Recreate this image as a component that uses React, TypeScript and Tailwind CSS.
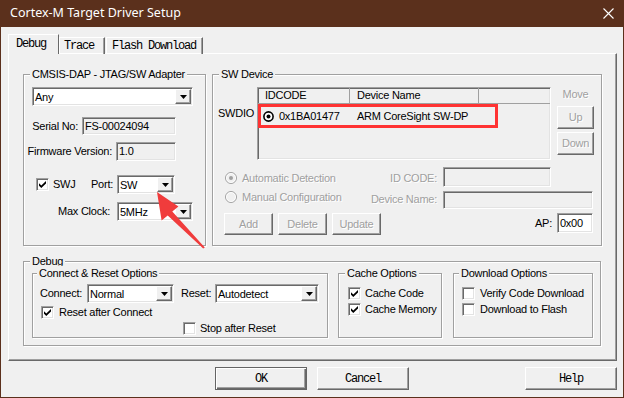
import type { ReactNode } from "react";

// Cortex-M Target Driver Setup — classic Win32 dialog look

const sunken =
  "border border-t-[#a0a0a0] border-l-[#a0a0a0] border-b-white border-r-white shadow-[inset_1px_1px_0_#696969,inset_-1px_-1px_0_#e3e3e3]";
const raised =
  "border border-t-white border-l-white border-b-[#696969] border-r-[#696969] shadow-[inset_-1px_-1px_0_#a0a0a0]";
const etched = "border border-[#a0a0a0] shadow-[1px_1px_0_#fff,inset_1px_1px_0_#fff]";
const dim = "text-[#a0a0a0] [text-shadow:1px_1px_0_#fff]";
const mono = "font-['Liberation_Mono',monospace] text-[12px] tracking-[-1.2px]";

function Tri() {
  return (
    <svg width="7" height="4" viewBox="0 0 7 4">
      <path d="M0 0h7L3.5 4z" fill="#000" />
    </svg>
  );
}

function Group({
  title,
  className,
  titleClass,
  children,
}: {
  title: string;
  className: string;
  titleClass: string;
  children?: ReactNode;
}) {
  return (
    <div className={`${etched} ${className}`}>
      <div className={`-mt-[8px] w-fit px-[2px] leading-[14px] whitespace-nowrap bg-[#f0f0f0] ${titleClass}`}>
        {title}
      </div>
      {children}
    </div>
  );
}

function Combo({ value, className }: { value: string; className: string }) {
  return (
    <div className={`flex bg-white ${sunken} ${className}`}>
      <span className="flex-1 self-center pl-[2px] leading-[14px] whitespace-nowrap">{value}</span>
      <span className={`m-px w-[16px] flex items-center justify-center bg-[#f0f0f0] ${raised}`}>
        <Tri />
      </span>
    </div>
  );
}

function Edit({ value, className, white }: { value?: string; className: string; white?: boolean }) {
  return (
    <div className={`flex items-center pl-[2px] whitespace-nowrap ${sunken} ${white ? "bg-white" : "bg-[#f0f0f0]"} ${className}`}>
      {value}
    </div>
  );
}

function Btn({ label, className, disabled }: { label: string; className: string; disabled?: boolean }) {
  return (
    <div className={`flex items-center justify-center ${raised} ${disabled ? dim : ""} ${className}`}>{label}</div>
  );
}

function Check({ checked }: { checked?: boolean }) {
  return (
    <div className={`w-[13px] h-[13px] shrink-0 flex items-center justify-center bg-white ${sunken}`}>
      {checked && (
        <svg width="7" height="7" viewBox="0 0 7 7">
          <polygon points="0,2.3 2.3,4.5 7,0 7,2.5 2.3,7 0,4.7" fill="#000" />
        </svg>
      )}
    </div>
  );
}

function Radio({ checked }: { checked?: boolean }) {
  return (
    <svg width="12" height="12" viewBox="0 0 12 12" className="shrink-0">
      <circle cx="6" cy="6" r="5.5" fill="#f0f0f0" stroke="#a0a0a0" />
      <circle cx="6" cy="6" r="4.5" fill="none" stroke="#ffffff" strokeWidth="0.8" />
      {checked && <circle cx="6" cy="6" r="2" fill="#a0a0a0" />}
    </svg>
  );
}

function Bullseye() {
  return (
    <svg width="11" height="11" viewBox="0 0 11 11" className="shrink-0">
      <circle cx="5.5" cy="5.5" r="4.6" fill="#fff" stroke="#000" strokeWidth="1.6" />
      <circle cx="5.5" cy="5.5" r="2" fill="#000" />
    </svg>
  );
}

export default function App() {
  return (
    <div className="relative w-[624px] h-[398px] overflow-hidden bg-[#f0f0f0] border-x border-b border-[#5b301c] font-['Liberation_Sans',Arial,sans-serif] text-[11px] tracking-[-0.25px] text-black">
      {/* Title bar */}
      <div className="h-[27px] flex items-center justify-between pl-[9px] pr-[9px] bg-[#5b301c] text-white font-['Noto_Sans',sans-serif] text-[12.5px] tracking-normal">
        <span>Cortex-M Target Driver Setup</span>
        <svg width="11" height="11" viewBox="0 0 11 11">
          <path d="M0.5 0.5L10.5 10.5M10.5 0.5L0.5 10.5" stroke="#fff" strokeWidth="1.1" />
        </svg>
      </div>

      <div className="pl-[7px] pr-[6px]">
        {/* Tabs */}
        <div className={`mt-[7px] h-[20px] flex items-end ${mono}`}>
          <div className="relative z-10 h-[20px] w-[51px] pl-[7px] pt-[2px] leading-[14px] bg-[#f0f0f0] border-t border-l border-r border-t-white border-l-white border-r-[#696969]">
            Debug
          </div>
          <div className="h-[17px] w-[46px] pl-[4px] pt-[1px] leading-[14px] border-t border-l border-r border-t-white border-l-white border-r-[#696969] shadow-[inset_-1px_0_0_#a0a0a0]">
            Trace
          </div>
          <div className="ml-px h-[17px] w-[97px] pl-[5px] pt-[1px] leading-[14px] whitespace-nowrap border-t border-l border-r border-t-white border-l-white border-r-[#696969] shadow-[inset_-1px_0_0_#a0a0a0]">
            Flash Download
          </div>
        </div>

        {/* Tab page */}
        <div className="-mt-px w-[609px] h-[308px] border border-t-white border-l-white border-r-[#696969] border-b-[#696969] shadow-[inset_-1px_-1px_0_#a0a0a0]">
          <div className="mt-[20px] ml-[14px] flex gap-[6px]">
            {/* Adapter */}
            <Group title="CMSIS-DAP - JTAG/SW Adapter" className="w-[183px] h-[172px]" titleClass="ml-[6px]">
              <Combo value="Any" className="mt-[6px] ml-[8px] w-[161px] h-[19px]" />
              <div className="mt-[11px] flex items-center h-[18px]">
                <span className="w-[58px] flex justify-end pr-[4px] whitespace-nowrap">Serial No:</span>
                <Edit value="FS-00024094" className="w-[94px] h-[18px]" />
              </div>
              <div className="mt-[7px] flex items-center h-[19px]">
                <span className="w-[92px] flex justify-end pr-[4px] whitespace-nowrap">Firmware Version:</span>
                <Edit value="1.0" className="w-[60px] h-[19px]" />
              </div>
              <div className="mt-[14px] flex items-center h-[19px]">
                <div className="w-[64px] flex items-center pl-[12px]">
                  <Check checked />
                  <span className="ml-[4px]">SWJ</span>
                </div>
                <span className="w-[29px] flex justify-end pr-[4px]">Port:</span>
                <Combo value="SW" className="w-[58px] h-[19px]" />
              </div>
              <div className="mt-[8px] flex items-center h-[19px]">
                <span className="w-[93px] flex justify-end pr-[7px] whitespace-nowrap">Max Clock:</span>
                <Combo value="5MHz" className="w-[76px] h-[19px]" />
              </div>
            </Group>

            {/* SW Device */}
            <Group title="SW Device" className="w-[390px] h-[172px]" titleClass="ml-[6px]">
              <div className="mt-[6px] flex">
                <div className="w-[44px] pl-[5px] pt-[19px] leading-[14px]">SWDIO</div>
                <div className={`w-[294px] h-[73px] flex flex-col bg-[#f0f0f0] ${sunken}`}>
                  <div className="h-[16px] flex leading-[15px] border-b border-[#a0a0a0]">
                    <div className="w-[92px] pl-[7px] border-r border-[#a0a0a0]">IDCODE</div>
                    <div className="w-[129px] pl-[7px] border-r border-[#a0a0a0]">Device Name</div>
                  </div>
                  <div className="relative h-[24px] flex items-center whitespace-nowrap">
                    <div className="w-[92px] flex items-center pl-[5px]">
                      <Bullseye />
                      <span className="ml-[5px]">0x1BA01477</span>
                    </div>
                    <div className="pl-[7px]">ARM CoreSight SW-DP</div>
                    <div className="absolute left-0 top-0 w-[240px] h-[24px] border-[3px] border-[#f33]" />
                  </div>
                </div>
                <div className="ml-[6px] w-[37px] flex flex-col">
                  <span className={`leading-[14px] text-center ${dim}`}>Move</span>
                  <Btn label="Up" disabled className="mt-[5px] h-[23px]" />
                  <Btn label="Down" disabled className="mt-[3px] h-[23px]" />
                </div>
              </div>

              <div className="mt-[7px] flex h-[20px] whitespace-nowrap">
                <div className={`w-[170px] mt-[4px] h-[14px] pl-[12px] flex items-center ${dim}`}>
                  <Radio checked />
                  <span className="ml-[5px]">Automatic Detection</span>
                </div>
                <div className={`w-[60px] mt-[4px] h-[14px] leading-[14px] flex justify-end pr-[6px] ${dim}`}>ID CODE:</div>
                <Edit className="w-[108px] h-[20px]" />
              </div>
              <div className="mt-[3px] flex items-start h-[20px] whitespace-nowrap">
                <div className={`w-[170px] h-[14px] pl-[12px] flex items-center ${dim}`}>
                  <Radio />
                  <span className="ml-[5px]">Manual Configuration</span>
                </div>
                <div className={`w-[60px] mt-[2px] h-[14px] leading-[14px] flex justify-end pr-[6px] ${dim}`}>Device Name:</div>
                <Edit className="mt-px w-[150px] h-[18px]" />
              </div>

              <div className="mt-[3px] flex items-start pl-[11px] pr-[8px]">
                <Btn label="Add" disabled className="w-[49px] h-[22px]" />
                <Btn label="Delete" disabled className="ml-[5px] w-[49px] h-[22px]" />
                <Btn label="Update" disabled className="ml-[5px] w-[49px] h-[22px]" />
                <div className="ml-auto flex items-center h-[20px]">
                  <span className="mr-[5px]">AP:</span>
                  <Edit white value="0x00" className="w-[36px] h-[20px]" />
                </div>
              </div>
            </Group>
          </div>

          {/* Debug options */}
          <div className="mt-[15px] ml-[14px]">
            <Group title="Debug" className="w-[578px] h-[85px]" titleClass="ml-[6px]">
              <div className="mt-[5px] ml-[8px] flex whitespace-nowrap">
                <Group title="Connect & Reset Options" className="w-[296px] h-[65px]" titleClass="ml-[4px]">
                  <div className="mt-[4px] flex items-center h-[19px]">
                    <span className="w-[54px] pl-[7px]">Connect:</span>
                    <Combo value="Normal" className="w-[87px] h-[19px]" />
                    <span className="w-[41px] pl-[7px]">Reset:</span>
                    <Combo value="Autodetect" className="w-[104px] h-[19px]" />
                  </div>
                  <div className="mt-[2px] flex items-center h-[14px] pl-[8px]">
                    <Check checked />
                    <span className="ml-[5px]">Reset after Connect</span>
                  </div>
                  <div className="mt-[2px] flex items-center h-[14px] pl-[150px]">
                    <Check />
                    <span className="ml-[4px]">Stop after Reset</span>
                  </div>
                </Group>

                <Group title="Cache Options" className="ml-[10px] w-[104px] h-[65px]" titleClass="ml-[6px]">
                  <div className="mt-[6px] flex items-center h-[14px] pl-[9px]">
                    <Check checked />
                    <span className="ml-[4px]">Cache Code</span>
                  </div>
                  <div className="mt-[2px] flex items-center h-[14px] pl-[9px]">
                    <Check checked />
                    <span className="ml-[4px]">Cache Memory</span>
                  </div>
                </Group>

                <Group title="Download Options" className="ml-[11px] w-[140px] h-[65px]" titleClass="ml-[5px]">
                  <div className="mt-[6px] flex items-center h-[14px] pl-[8px]">
                    <Check />
                    <span className="ml-[5px]">Verify Code Download</span>
                  </div>
                  <div className="mt-[2px] flex items-center h-[14px] pl-[8px]">
                    <Check />
                    <span className="ml-[5px]">Download to Flash</span>
                  </div>
                </Group>
              </div>
            </Group>
          </div>
        </div>

        {/* Dialog buttons */}
        <div className={`mt-[6px] flex h-[23px] ${mono}`}>
          <div className="ml-[207px] w-[92px] h-[23px] flex items-center justify-center border border-[#646464] shadow-[inset_1px_1px_0_#fff,inset_-1px_-1px_0_#696969,inset_-2px_-2px_0_#a0a0a0]">
            OK
          </div>
          <Btn label="Cancel" className="ml-[10px] w-[92px] h-[23px]" />
          <Btn label="Help" className="ml-auto w-[92px] h-[23px]" />
        </div>
      </div>

      {/* Red annotation arrow */}
      <svg className="absolute left-0 top-0 pointer-events-none" width="624" height="398" viewBox="0 0 624 398">
        <polygon
          points="156,192 177.4,206.4 171.3,211.6 203.8,247.4 202.2,248.6 166.7,215.4 160.6,220.6"
          fill="#f03c3c"
        />
      </svg>
    </div>
  );
}
